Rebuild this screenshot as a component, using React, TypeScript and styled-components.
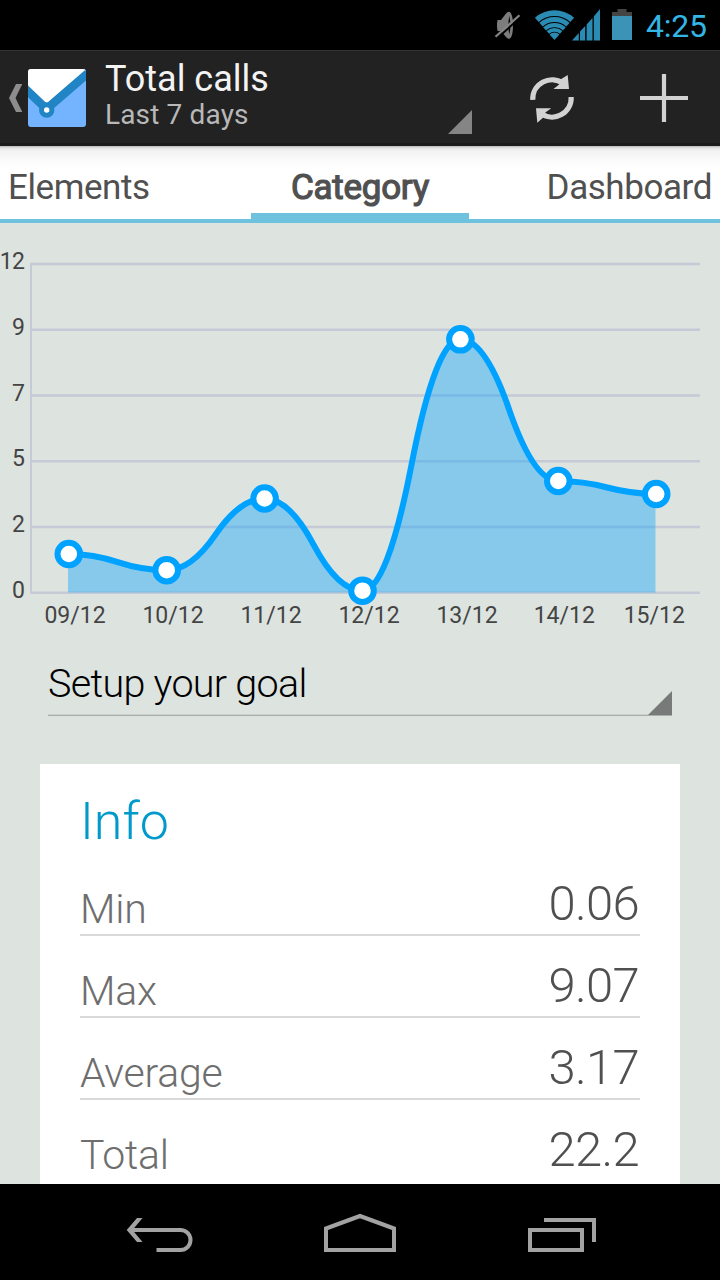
import React from 'react';
import styled, { createGlobalStyle } from 'styled-components';

const GlobalStyle = createGlobalStyle`
  * { box-sizing: border-box; }
  body { margin: 0; background: #000; font-family: Roboto, "Noto Sans", sans-serif; }
`;

const Screen = styled.div`
  width: 720px;
  height: 1280px;
  display: flex;
  flex-direction: column;
  overflow: hidden;
  background: #dde3df;
`;

const StatusBar = styled.div`
  height: 50px;
  flex: none;
  display: flex;
  justify-content: flex-end;
  background: #000;
`;

const Clock = styled.div`
  width: 74px;
  font-size: 32px;
  line-height: 52px;
  letter-spacing: -0.2px;
  color: #33b5e5;
`;

const ActionBar = styled.header`
  height: 96px;
  flex: none;
  display: flex;
  background: #222;
  border-top: 1px solid #333;
  border-bottom: 3px solid #1b191b;
`;

const TitleSpinner = styled.div`
  width: 373px;
  flex: none;
  display: flex;
  justify-content: space-between;
  align-items: flex-end;
  padding: 0 0 9px 6px;
`;

const Titles = styled.div`
  align-self: flex-start;
  padding-top: 7px;
  white-space: nowrap;
`;

const Title = styled.div`
  font-size: 36px;
  line-height: 43px;
  color: #f3f3f3;
`;

const Subtitle = styled.div`
  font-size: 28px;
  line-height: 28px;
  letter-spacing: 0.15px;
  color: #b8b8b8;
`;

const Corner = styled.div<{ $color: string }>`
  width: 24px;
  height: 24px;
  background: ${(p) => p.$color};
  clip-path: polygon(100% 0, 100% 100%, 0 100%);
`;

const Tabs = styled.nav`
  height: 77px;
  flex: none;
  display: grid;
  grid-template-columns: 1fr 218px 1fr;
  border-bottom: 4px solid #6fc2de;
  background: linear-gradient(#b9b9b9 0, #e4e4e4 2px, #f3f3f3 5px, #fafafa 14px, #fff 24px);
`;

const Tab = styled.div<{ $active?: boolean; $align: string }>`
  height: 73px;
  padding: ${(p) => (p.$active ? 0 : '0 8px')};
  font-size: 35px;
  line-height: 84px;
  color: #505050;
  white-space: nowrap;
  text-align: ${(p) => p.$align};
  letter-spacing: -0.43px;
  ${(p) =>
    p.$active &&
    `
    letter-spacing: -0.25px;
    -webkit-text-stroke: 1.2px #505050;
    border-bottom: 6px solid #6fc2de;
  `}
`;

const Content = styled.main`
  flex: 1;
  min-height: 0;
  overflow: hidden;
  display: flex;
  flex-direction: column;
`;

const ChartArea = styled.section`
  height: 417px;
  flex: none;
`;

const GoalSpinner = styled.div`
  height: 76px;
  flex: none;
  margin: 0 48px 48px;
  display: flex;
  justify-content: space-between;
  align-items: flex-end;
  border-bottom: 1px solid #a9aeab;
  box-shadow: inset 0 -1px #cdd3cf;
`;

const GoalText = styled.div`
  align-self: flex-start;
  font-size: 39.5px;
  font-weight: 300;
  line-height: 88px;
  letter-spacing: -0.7px;
  color: #000;
  white-space: nowrap;
`;

const Card = styled.section`
  flex: none;
  margin: 0 40px;
  padding: 0 40px;
  height: 480px;
  background: #fff;
`;

const CardTitle = styled.h2`
  margin: 0;
  height: 90px;
  font-size: 52px;
  font-weight: 300;
  line-height: 116px;
  color: #0099cc;
`;

const Row = styled.div`
  height: 82px;
  display: flex;
  justify-content: space-between;
  align-items: flex-end;
  border-bottom: 2px solid #dadada;

  &:last-child {
    border-bottom-color: transparent;
  }
`;

const Label = styled.span`
  font-size: 41px;
  font-weight: 300;
  line-height: 50px;
  letter-spacing: -0.25px;
  color: #6e6e6e;
`;

const Value = styled.span`
  padding-right: 1px;
  font-size: 49px;
  font-weight: 300;
  line-height: 60px;
  letter-spacing: -0.7px;
  color: #505050;
`;

const NavBar = styled.footer`
  height: 96px;
  flex: none;
  background: #000;
`;

const PTS: [number, number][] = [
  [68.8, 554],
  [166.7, 570.2],
  [264.6, 498.5],
  [362.5, 590.7],
  [460.4, 339.3],
  [558.3, 481],
  [656.2, 494],
];
const BASELINE = 592.5;
const Y_TICKS = ['12', '9', '7', '5', '2', '0'];
const X_TICKS: [number, string][] = [
  [75, '09/12'],
  [173, '10/12'],
  [271, '11/12'],
  [369, '12/12'],
  [467, '13/12'],
  [564.3, '14/12'],
  [654.3, '15/12'],
];

// Each segment is two parabolas that are flat at the data points and meet halfway.
const curve = PTS.slice(1).reduce((d, [x, y], i) => {
  const [px, py] = PTS[i];
  const quarter = (x - px) / 4;
  return `${d} Q${px + quarter} ${py} ${(px + x) / 2} ${(py + y) / 2} Q${x - quarter} ${y} ${x} ${y}`;
}, `M${PTS[0][0]} ${PTS[0][1]}`);

const TickText = styled.text<{ $spacing: number }>`
  font-size: 23px;
  letter-spacing: ${(p) => p.$spacing}px;
  fill: #444;
`;

const Chart = () => (
  <svg width="720" height="417" viewBox="0 223 720 417" display="block">
    {Y_TICKS.map((t, i) => {
      const y = 264 + i * 65.75;
      return (
        <g key={t}>
          <path d={`M30 ${y}H700`} stroke="#c5cad6" strokeWidth="2.4" />
          <TickText x="24.5" y={y + 5} textAnchor="end" $spacing={-0.5}>
            {t}
          </TickText>
        </g>
      );
    })}
    <path d="M31 263V593.5" stroke="#c5cad6" strokeWidth="2" />
    {X_TICKS.map(([x, t]) => (
      <TickText key={t} x={x} y="623" textAnchor="middle" $spacing={0}>
        {t}
      </TickText>
    ))}
    <path d={`${curve} L655.5 494V${BASELINE}H68V554Z`} fill="#009fff" fillOpacity="0.39" />
    <path d={curve} fill="none" stroke="#00a2ff" strokeWidth="6" />
    {PTS.map(([x, y]) => (
      <circle key={x} cx={x} cy={y} r="11.3" fill="#fff" stroke="#00a2ff" strokeWidth="6" />
    ))}
  </svg>
);

const WIFI_TIP = { x: 74.5, y: 40 };
const wifiBand = (outer: number, inner: number) => {
  const s = 0.66;
  const c = 0.751;
  const { x, y } = WIFI_TIP;
  return `M${x - outer * s} ${y - outer * c}A${outer} ${outer} 0 0 1 ${x + outer * s} ${y - outer * c}L${x + inner * s} ${y - inner * c}A${inner} ${inner} 0 0 0 ${x - inner * s} ${y - inner * c}Z`;
};

const StatusIcons = () => (
  <svg width="166" height="50" viewBox="0 0 166 50">
    <g fill="#7c7c7c">
      <path d="M17.5 20H21L26 13.5Q28 11 30 12Q33 15 33 25.5Q33 36 30 38.5Q28 39.5 26 37L21 31H17.5Q16.5 25 17.5 20Z" />
      <path d="M29.3 16Q27.5 25 29.3 34.5Q31.5 25 29.3 16Z" fill="#000" />
    </g>
    <path d="M17.5 38L41.5 16.3" stroke="#000" strokeWidth="2" />
    <path d="M15.5 36.8L39.5 15.2" stroke="#858585" strokeWidth="2.2" />
    <g fill="#2a8bb3">
      <path d={wifiBand(29.7, 24)} />
      <path d={wifiBand(22.9, 17.9)} />
      <path d={wifiBand(17.1, 12.8)} />
      <path d={wifiBand(11.9, 8.2)} />
      <path d={wifiBand(7.4, 0)} />
      <path d="M92 40.5L98.8 33V40.5ZM100 31.6L105.2 26V40.5H100ZM106.6 24.4L112.5 18V40.5H106.6ZM113.8 16.4L120 9V40.5H113.8Z" />
    </g>
    <path d="M137.5 9H146.5V12H152V16H132V12H137.5Z" fill="#444" />
    <path d="M132 16H152V40H132Z" fill="#3b94b8" />
  </svg>
);

const UpIcon = () => (
  <svg width="99" height="92" viewBox="0 51 99 92">
    <defs>
      <clipPath id="tile">
        <rect x="28" y="69" width="58" height="58" rx="3" />
      </clipPath>
    </defs>
    <path d="M16 84H22.3L15.5 98L22.3 112H16L9 98Z" fill="#8d8d8d" />
    <g clipPath="url(#tile)">
      <rect x="28" y="69" width="58" height="58" fill="#74b4ff" />
      <path d="M28 69H86V72L46.5 109L28 91Z" fill="#fff" />
      <path d="M24 87.5L46.5 109L90 71.5" fill="none" stroke="#2185c5" strokeWidth="8.5" />
    </g>
    <circle cx="46.7" cy="110" r="5.2" fill="#fff" stroke="#2185c5" strokeWidth="5" />
  </svg>
);

const Actions = () => (
  <svg width="248" height="92" viewBox="472 51 248 92">
    <g fill="none" stroke="#d2d2d2" strokeWidth="5.2">
      <path d="M532.8 99.8A19.2 19.2 0 0 1 563.5 83.6" />
      <path d="M571.2 97A19.2 19.2 0 0 1 540.5 113.2" />
    </g>
    <path d="M567.7 75L569 89H553.5L559.4 84.2L560.5 79.5ZM537.3 122.8L536 108.2H551.3L545.3 112.6L543.8 117Z" fill="#d2d2d2" />
    <path d="M640 98H688M664 74V122" stroke="#d2d2d2" strokeWidth="4.2" />
  </svg>
);

const NavIcons = () => (
  <svg width="720" height="96" viewBox="0 1184 720 96" display="block">
    <g fill="none" stroke="#a2a2a2" strokeWidth="4">
      <path d="M130 1230H180.5A10 10 0 0 1 180.5 1250H156.5" />
      <path d="M326 1250V1228.5L360 1216L394 1228.5V1250Z" />
      <path d="M530 1230H582V1250H530ZM544 1220H594V1242" />
    </g>
    <path d="M137 1218H142.5L132.5 1230L142.5 1242H137L126.7 1230Z" fill="#a2a2a2" />
  </svg>
);

const INFO = [
  ['Min', '0.06'],
  ['Max', '9.07'],
  ['Average', '3.17'],
  ['Total', '22.2'],
];

export default function App() {
  return (
    <Screen>
      <GlobalStyle />
      <StatusBar>
        <StatusIcons />
        <Clock>4:25</Clock>
      </StatusBar>
      <ActionBar>
        <UpIcon />
        <TitleSpinner>
          <Titles>
            <Title>Total calls</Title>
            <Subtitle>Last 7 days</Subtitle>
          </Titles>
          <Corner $color="#858585" />
        </TitleSpinner>
        <Actions />
      </ActionBar>
      <Tabs>
        <Tab $align="left">Elements</Tab>
        <Tab $active $align="center">Category</Tab>
        <Tab $align="right">Dashboard</Tab>
      </Tabs>
      <Content>
        <ChartArea>
          <Chart />
        </ChartArea>
        <GoalSpinner>
          <GoalText>Setup your goal</GoalText>
          <Corner $color="#787a79" />
        </GoalSpinner>
        <Card>
          <CardTitle>Info</CardTitle>
          {INFO.map(([label, value]) => (
            <Row key={label}>
              <Label>{label}</Label>
              <Value>{value}</Value>
            </Row>
          ))}
        </Card>
      </Content>
      <NavBar>
        <NavIcons />
      </NavBar>
    </Screen>
  );
}
